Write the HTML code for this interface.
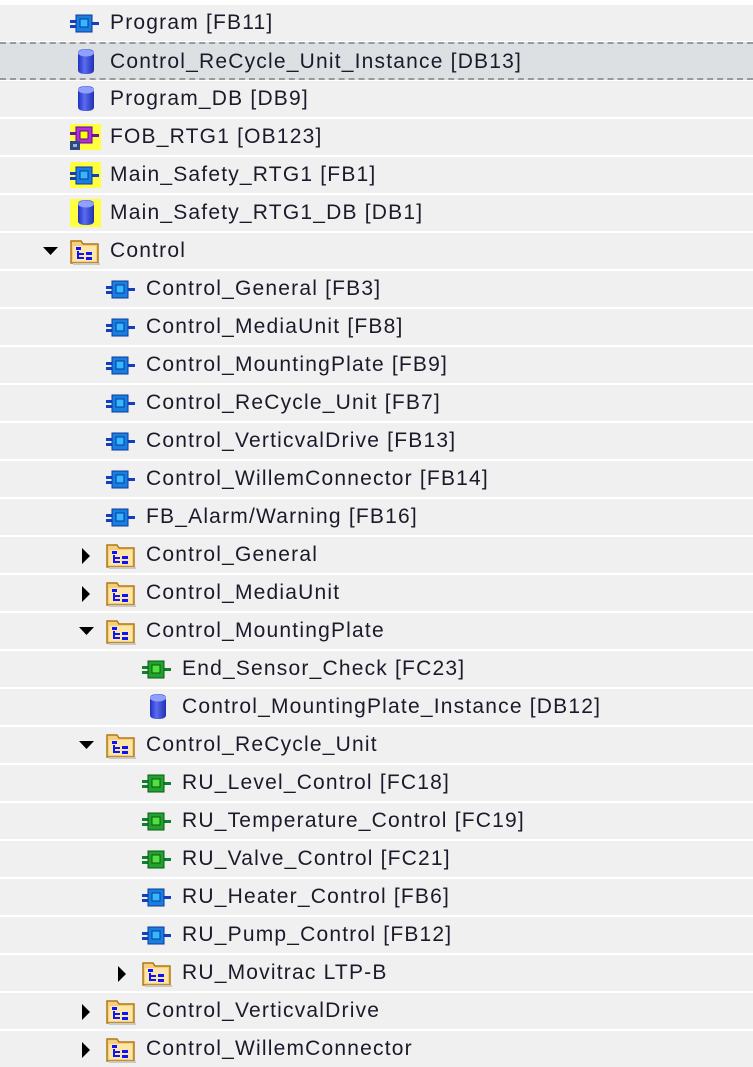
<!DOCTYPE html>
<html><head><meta charset="utf-8"><style>
html,body{margin:0;width:753px;height:1054px;overflow:hidden;background:#fff;font-family:"Liberation Sans",sans-serif;}
.r{position:absolute;left:0;width:753px;height:36px;background:#f0f0f0;}
.r.sel{background:#dde0e3;border-top:2px dashed #9a9a9a;border-bottom:2px dashed #9a9a9a;height:34px;margin-top:-1px}
.t{position:absolute;top:6px;font-size:21px;letter-spacing:1.2px;color:#1a1a2a;white-space:nowrap}
.i{position:absolute;top:6px}
.a{position:absolute;top:11px}
</style></head><body>
<svg width="0" height="0" style="position:absolute">
<defs>
<g id="fb"><rect x="0" y="9" width="6" height="3" fill="#1040c0"/><rect x="0" y="14" width="6" height="3" fill="#1040c0"/><rect x="22" y="11" width="7" height="3" fill="#1040c0"/><rect x="6" y="4" width="16" height="17" fill="#1a7de0" stroke="#0a3a9a"/><rect x="10" y="8" width="8" height="8" fill="#34b8ff" stroke="#0a3a9a"/></g>
<g id="fc"><rect x="0" y="9" width="6" height="3" fill="#108030"/><rect x="0" y="14" width="6" height="3" fill="#108030"/><rect x="22" y="11" width="7" height="3" fill="#108030"/><rect x="6" y="4" width="16" height="17" fill="#22a030" stroke="#0a5a10"/><rect x="10" y="8" width="8" height="8" fill="#50e040" stroke="#0a5a10"/></g>
<g id="db"><defs><linearGradient id="dg" x1="0" x2="1"><stop offset="0" stop-color="#2030c0"/><stop offset=".4" stop-color="#5a6cf0"/><stop offset="1" stop-color="#2030b0"/></linearGradient></defs><path d="M3 4 Q3 0 11 0 Q19 0 19 4 V21 Q19 25 11 25 Q3 25 3 21Z" fill="url(#dg)"/><ellipse cx="11" cy="4" rx="8" ry="3.5" fill="#90a0ff"/></g>
<g id="fo"><path d="M1 2 H11 L13 5 H28 V24 H1Z" fill="#f5cf7a" stroke="#b07818" stroke-width="1.5"/><rect x="3" y="7" width="23" height="15" fill="#fde6a8"/><rect x="6" y="8" width="5" height="3" fill="#0a14ff"/><path d="M8 12 V19 H14 M8 15 H14" stroke="#0a14ff" stroke-width="2" fill="none"/><rect x="16" y="13" width="6" height="3" fill="#0a14ff"/><rect x="16" y="18" width="6" height="3" fill="#0a14ff"/><rect x="3" y="24" width="27" height="2" fill="#c8c8c8"/></g>
</defs></svg>
<div id="c"></div>
<script>
const rows=[
[0,'fb','Program [FB11]'],[0,'db','Control_ReCycle_Unit_Instance [DB13]','','sel'],[0,'db','Program_DB [DB9]'],
[0,'ob','FOB_RTG1 [OB123]'],[0,'fby','Main_Safety_RTG1 [FB1]'],[0,'dby','Main_Safety_RTG1_DB [DB1]'],
[0,'fo','Control','d'],
[1,'fb','Control_General [FB3]'],[1,'fb','Control_MediaUnit [FB8]'],[1,'fb','Control_MountingPlate [FB9]'],[1,'fb','Control_ReCycle_Unit [FB7]'],[1,'fb','Control_VerticvalDrive [FB13]'],[1,'fb','Control_WillemConnector [FB14]'],[1,'fb','FB_Alarm/Warning [FB16]'],
[1,'fo','Control_General','r'],[1,'fo','Control_MediaUnit','r'],[1,'fo','Control_MountingPlate','d'],
[2,'fc','End_Sensor_Check [FC23]'],[2,'db','Control_MountingPlate_Instance [DB12]'],
[1,'fo','Control_ReCycle_Unit','d'],
[2,'fc','RU_Level_Control [FC18]'],[2,'fc','RU_Temperature_Control [FC19]'],[2,'fc','RU_Valve_Control [FC21]'],[2,'fb','RU_Heater_Control [FB6]'],[2,'fb','RU_Pump_Control [FB12]'],
[2,'fo','RU_Movitrac LTP-B','r'],[1,'fo','Control_VerticvalDrive','r'],[1,'fo','Control_WillemConnector','r']];
let h='';
rows.forEach((r,i)=>{
 const top=5+38*i, off=36*r[0];
 let ic='';
 const x=70+off;
 if(r[1]=='fb')ic=`<svg class="i" style="left:${x}px" width="31" height="26"><use href="#fb"/></svg>`;
 if(r[1]=='fc')ic=`<svg class="i" style="left:${x}px" width="31" height="26"><use href="#fc"/></svg>`;
 if(r[1]=='fby')ic=`<svg class="i" style="left:${x}px;top:5px" width="31" height="26"><rect width="31" height="26" fill="#ffff40"/><use href="#fb" x="0" y="1"/></svg>`;
 if(r[1]=='ob')ic=`<svg class="i" style="left:${x}px;top:5px" width="31" height="26"><rect width="31" height="26" fill="#ffff40"/><rect x="0" y="8" width="6" height="3" fill="#7010a0"/><rect x="22" y="10" width="7" height="3" fill="#7010a0"/><rect x="6" y="3" width="16" height="16" fill="#b030e0" stroke="#5a0a8a"/><rect x="10" y="7" width="8" height="8" fill="#ffff00" stroke="#5a0a8a"/><rect x="0" y="17" width="10" height="9" fill="#2a4a80"/><rect x="3" y="20" width="4" height="3" fill="#aac"/></svg>`;
 if(r[1]=='db')ic=`<svg class="i" style="left:${x+5}px;top:5px" width="22" height="26"><use href="#db"/></svg>`;
 if(r[1]=='dby')ic=`<svg class="i" style="left:${x}px;top:4px" width="31" height="28"><rect width="31" height="28" fill="#ffff40"/><use href="#db" x="5" y="1"/></svg>`;
 if(r[1]=='fo')ic=`<svg class="i" style="left:${x}px;top:6px" width="31" height="27"><use href="#fo"/></svg>`;
 let ar='';
 if(r[3]=='d')ar=`<svg class="a" style="left:${43+off}px;top:14px" width="16" height="9"><path d="M0 0H15L7.5 8Z" fill="#000"/></svg>`;
 if(r[3]=='r')ar=`<svg class="a" style="left:${46+off}px" width="9" height="16"><path d="M0 0V16L8 8Z" fill="#000"/></svg>`;
 h+=`<div class="r ${r[4]||''}" style="top:${top}px">${ar}${ic}<span class="t" style="left:${110+off}px">${r[2]}</span></div>`;
});
document.getElementById('c').innerHTML=h;
</script>
</body></html>
